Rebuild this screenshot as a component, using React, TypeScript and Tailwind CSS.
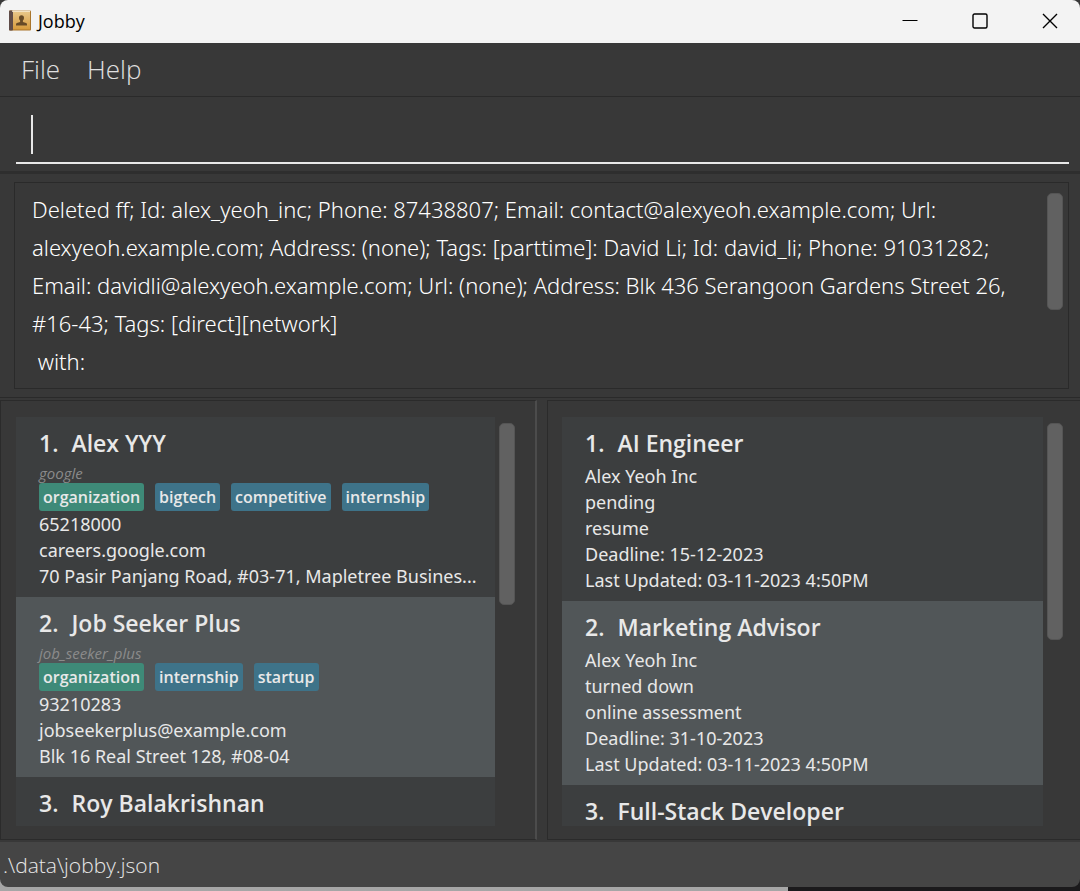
import type { ReactNode } from 'react';

type Contact = {
  name: string;
  id: string;
  kind: string;
  tags: string[];
  details: string[];
};

type Application = {
  title: string;
  details: string[];
};

const contacts: Contact[] = [
  {
    name: 'Alex YYY',
    id: 'google',
    kind: 'organization',
    tags: ['bigtech', 'competitive', 'internship'],
    details: ['65218000', 'careers.google.com', '70 Pasir Panjang Road, #03-71, Mapletree Busines...'],
  },
  {
    name: 'Job Seeker Plus',
    id: 'job_seeker_plus',
    kind: 'organization',
    tags: ['internship', 'startup'],
    details: ['93210283', 'jobseekerplus@example.com', 'Blk 16 Real Street 128, #08-04'],
  },
  { name: 'Roy Balakrishnan', id: '', kind: '', tags: [], details: [] },
];

const applications: Application[] = [
  {
    title: 'AI Engineer',
    details: ['Alex Yeoh Inc', 'pending', 'resume', 'Deadline: 15-12-2023', 'Last Updated: 03-11-2023 4:50PM'],
  },
  {
    title: 'Marketing Advisor',
    details: ['Alex Yeoh Inc', 'turned down', 'online assessment', 'Deadline: 31-10-2023', 'Last Updated: 03-11-2023 4:50PM'],
  },
  { title: 'Full-Stack Developer', details: [] },
];

const resultText = [
  'Deleted ff; Id: alex_yeoh_inc; Phone: 87438807; Email: contact@alexyeoh.example.com; Url:',
  'alexyeoh.example.com; Address: (none); Tags: [parttime]: David Li; Id: david_li; Phone: 91031282;',
  'Email: davidli@alexyeoh.example.com; Url: (none); Address: Blk 436 Serangoon Gardens Street 26,',
  '#16-43; Tags: [direct][network]',
  ' with:',
];

function AppIcon() {
  return (
    <svg width="22" height="21" viewBox="0 0 22 21" aria-hidden="true">
      <defs>
        <linearGradient id="cover" x1="0" y1="0" x2="0" y2="1">
          <stop offset="0" stopColor="#e8c88c" />
          <stop offset="1" stopColor="#d79b3c" />
        </linearGradient>
      </defs>
      <rect x="0" y="0.5" width="22" height="20" rx="1" fill="#a9752c" />
      <rect x="0" y="0.5" width="4" height="20" rx="1" fill="#5f4c48" />
      <rect x="4" y="1" width="17" height="18.5" fill="url(#cover)" />
      <rect x="3" y="0.6" width="18" height="1.2" fill="#f5ead2" />
      <path
        d="M12.5 5.2c1.6 0 2.5 1.1 2.5 2.7 0 1.1-.4 2-1.1 2.6v1.4l3.2 1.1c.6.3.9.8.9 1.5v.9H7v-.9c0-.7.3-1.2.9-1.5l3.2-1.1v-1.4c-.7-.6-1.1-1.5-1.1-2.6 0-1.6.9-2.7 2.5-2.7z"
        fill="#664a27"
      />
    </svg>
  );
}

function TitleBar() {
  return (
    <header className="flex h-[43px] shrink-0 items-center gap-[10px] rounded-t-lg bg-[#f3f3f3] pb-[2px] pl-[9px] text-black">
      <div className="flex flex-1 items-center gap-[7px]">
        <AppIcon />
        <h1 className="text-[18px] leading-6">Jobby</h1>
      </div>
      <button type="button" aria-label="Minimize" className="flex h-full w-[60px] items-center justify-center">
        <svg width="16" height="16" viewBox="0 0 16 16" aria-hidden="true">
          <path d="M0.5 7.5h15" stroke="#000" strokeWidth="1" />
        </svg>
      </button>
      <button type="button" aria-label="Maximize" className="flex h-full w-[60px] items-center justify-center">
        <svg width="16" height="16" viewBox="0 0 16 16" fill="none" aria-hidden="true">
          <rect x="1" y="1" width="14" height="14" rx="1.5" stroke="#000" strokeWidth="1.4" />
        </svg>
      </button>
      <button type="button" aria-label="Close" className="flex h-full w-[60px] items-center justify-center">
        <svg width="16" height="16" viewBox="0 0 16 16" aria-hidden="true">
          <path d="M1 1l14 14M15 1L1 15" stroke="#000" strokeWidth="1.4" />
        </svg>
      </button>
    </header>
  );
}

function Thumb({ size }: { size: string }) {
  return <div className={`w-4 shrink-0 rounded-[5px] border border-[#555555] bg-[#616161] ${size}`} />;
}

function Card({ index, title, children }: { index: number; title: string; children?: ReactNode }) {
  return (
    <li className="shrink-0 bg-[#3c3e3f] px-[23px] pt-3 even:bg-[#515658]">
      <h2 className="flex gap-[13px] text-[23px] leading-7 font-semibold">
        <span>{index}.</span>
        <span>{title}</span>
      </h2>
      {children && <div className="pt-[6px] pb-2">{children}</div>}
    </li>
  );
}

function Details({ lines }: { lines: string[] }) {
  return (
    <>
      {lines.map((line) => (
        <p key={line} className="font-['Noto_Sans',sans-serif] text-[18px] leading-[26px] whitespace-nowrap">
          {line}
        </p>
      ))}
    </>
  );
}

function Tag({ label, tone }: { label: string; tone: string }) {
  return <span className={`rounded-[3px] px-1 text-[16px] leading-7 font-semibold ${tone}`}>{label}</span>;
}

export default function App() {
  return (
    <div className="flex h-screen flex-col overflow-hidden bg-[#383838] font-['Open_Sans','Noto_Sans',sans-serif] text-[#e8e8e8]">
      <TitleBar />

      <nav className="flex h-[54px] shrink-0 items-center gap-[27px] border-b border-[#2a2a2a] pb-[2px] pl-[21px] text-[26px] leading-9 font-light text-[#e0e0e0]">
        <button type="button">File</button>
        <button type="button">Help</button>
      </nav>

      <div className="h-[77px] shrink-0 border-b-3 border-[#2e2e2e] pr-[11px] pl-4">
        <div className="flex h-[67px] items-center border-b-2 border-[#e8e8e8] px-[15px] pt-[10px]">
          <div className="h-[39px] w-[2px] bg-[#e8e8e8]" />
          <input
            type="text"
            aria-label="Command"
            className="h-full min-w-0 flex-1 bg-transparent text-[24px] font-light outline-none"
          />
        </div>
      </div>

      <section className="shrink-0 border-b border-[#2a2a2a] px-[11px] pt-2 pb-2 pl-[14px]">
        <div className="flex h-[207px] border border-[#2a2a2a] pr-[5px] pl-[17px]">
          <textarea
            readOnly
            wrap="off"
            aria-label="Result"
            value={resultText.join('\n')}
            className="mt-[7px] h-[190px] min-w-0 flex-1 resize-none overflow-hidden bg-transparent font-['Noto_Sans',sans-serif] text-[22px] leading-[38px] font-light whitespace-pre text-white outline-none"
          />
          <div className="pt-[10px]">
            <Thumb size="h-[117px]" />
          </div>
        </div>
      </section>

      <main className="mt-[2px] grid min-h-0 flex-1 grid-cols-[537fr_533fr] gap-[10px]">
        <section className="flex min-h-0 min-w-0 gap-1 border border-r-2 border-[#2b2b2b] border-r-[#4c4c4c] pt-4 pr-5 pb-[13px] pl-[15px]">
          <ol className="flex min-w-0 flex-1 flex-col overflow-hidden bg-[#3c3e3f]">
            {contacts.map((contact, i) => (
              <Card key={contact.name} index={i + 1} title={contact.name}>
                {contact.id && (
                  <>
                    <p className="text-[15px] leading-5 text-[#8b8b8b] italic">{contact.id}</p>
                    <div className="flex gap-[11px]">
                      <Tag label={contact.kind} tone="bg-[#3e8a78]" />
                      {contact.tags.map((tag) => (
                        <Tag key={tag} label={tag} tone="bg-[#3e7389]" />
                      ))}
                    </div>
                    <Details lines={contact.details} />
                  </>
                )}
              </Card>
            ))}
          </ol>
          <div className="pt-[6px]">
            <Thumb size="h-[182px]" />
          </div>
        </section>

        <section className="flex min-h-0 min-w-0 gap-1 border border-r-0 border-[#2b2b2b] pt-4 pr-[17px] pb-[13px] pl-[14px]">
          <ol className="flex min-w-0 flex-1 flex-col overflow-hidden bg-[#3c3e3f]">
            {applications.map((application, i) => (
              <Card key={application.title} index={i + 1} title={application.title}>
                {application.details.length > 0 && <Details lines={application.details} />}
              </Card>
            ))}
          </ol>
          <div className="pt-[6px]">
            <Thumb size="h-[217px]" />
          </div>
        </section>
      </main>

      <div className="mt-[2px] shrink-0 bg-gradient-to-r from-[#a6a6a6] from-73% to-[#1b1a1c] to-73%">
        <footer className="mb-1 h-[45px] rounded-b-lg bg-[#454545] pl-[3px] text-[21px] leading-[46px] font-light">
          .\data\jobby.json
        </footer>
      </div>
    </div>
  );
}
